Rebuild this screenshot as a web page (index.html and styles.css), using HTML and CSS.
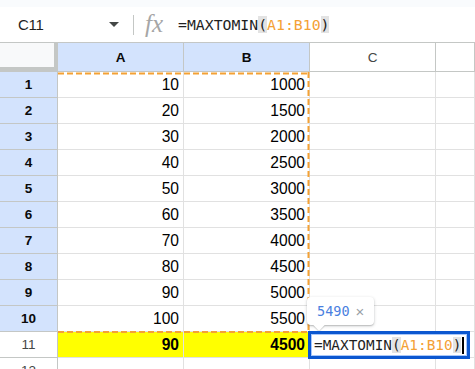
FILE: index.html
```html
<!DOCTYPE html>
<html>
<head>
<meta charset="utf-8">
<link rel="stylesheet" href="styles.css">
</head>
<body>
<div class="app">
  <div class="topstrip"></div>
  <div class="fbar">
    <div class="namebox"><span class="ref">C11</span><span class="caret"></span></div>
    <div class="sep"></div>
    <div class="fx">fx</div>
    <div class="formula">=MAXTOMIN<span class="paren">(</span><span class="rng">A1:B10</span><span class="paren">)</span></div>
  </div>
  <div class="sheet">
    <div class="grid">
      <div class="corner"></div>
      <div class="ch sel">A</div>
      <div class="ch sel">B</div>
      <div class="ch">C</div>
      <div class="ch"></div>

      <div class="rh sel">1</div><div class="c">10</div><div class="c">1000</div><div class="c"></div><div class="c"></div>
      <div class="rh sel">2</div><div class="c">20</div><div class="c">1500</div><div class="c"></div><div class="c"></div>
      <div class="rh sel">3</div><div class="c">30</div><div class="c">2000</div><div class="c"></div><div class="c"></div>
      <div class="rh sel">4</div><div class="c">40</div><div class="c">2500</div><div class="c"></div><div class="c"></div>
      <div class="rh sel">5</div><div class="c">50</div><div class="c">3000</div><div class="c"></div><div class="c"></div>
      <div class="rh sel">6</div><div class="c">60</div><div class="c">3500</div><div class="c"></div><div class="c"></div>
      <div class="rh sel">7</div><div class="c">70</div><div class="c">4000</div><div class="c"></div><div class="c"></div>
      <div class="rh sel">8</div><div class="c">80</div><div class="c">4500</div><div class="c"></div><div class="c"></div>
      <div class="rh sel">9</div><div class="c">90</div><div class="c">5000</div><div class="c"></div><div class="c"></div>
      <div class="rh sel">10</div><div class="c">100</div><div class="c">5500</div><div class="c"></div><div class="c"></div>
      <div class="rh">11</div><div class="c hl">90</div><div class="c hl">4500</div><div class="c"></div><div class="c"></div>
      <div class="rh">12</div><div class="c"></div><div class="c"></div><div class="c"></div><div class="c"></div>
    </div>

    <svg class="marquee" width="253" height="263" viewBox="0 0 253 263">
      <path d="M0 1.5 H251 M250.5 0 V261 M0 260 H251" fill="none" stroke="#f4a135" stroke-width="2" stroke-dasharray="6 3"/>
    </svg>

    <div class="tip">
      <span class="tipval">5490</span><span class="tipx">×</span>
      <span class="tail"></span>
    </div>

    <div class="editor">=MAXTOMIN<span class="paren">(</span><span class="rng">A1:B10</span><span class="paren">)</span><span class="cursor"></span></div>
  </div>
</div>
</body>
</html>
```

FILE: styles.css
```css
html, body {
  margin: 0;
  padding: 0;
  background: #ffffff;
  overflow: hidden;
}

.app {
  width: 475px;
  height: 369px;
  overflow: hidden;
  font-family: "Liberation Sans", Arial, sans-serif;
  color: #1f1f1f;
}

.topstrip {
  height: 7px;
  background: #f9fbfd;
}

.fbar {
  height: 35px;
  border-bottom: 1px solid #c4c7c5;
  display: flex;
  align-items: center;
  background: #ffffff;
}

.namebox {
  width: 133px;
  box-sizing: border-box;
  padding-left: 18px;
  display: flex;
  align-items: center;
}

.ref {
  font-size: 15px;
  color: #1f1f1f;
  letter-spacing: -0.3px;
}

.caret {
  margin-left: auto;
  margin-right: 14px;
  width: 0;
  height: 0;
  border-left: 5.5px solid transparent;
  border-right: 5.5px solid transparent;
  border-top: 5px solid #444746;
}

.sep {
  width: 1px;
  height: 20px;
  background: #c4c7c5;
}

.fx {
  margin-left: 11px;
  width: 33px;
  font-family: "Liberation Serif", "Times New Roman", serif;
  font-style: italic;
  font-size: 25px;
  color: #a6a6a6;
  letter-spacing: 0;
  line-height: 1;
  margin-top: -3px;
}

.formula {
  font-family: "DejaVu Sans Mono", monospace;
  font-size: 14.8px;
  color: #1f1f1f;
  white-space: nowrap;
}

.paren {
  background: #e3e3e3;
}

.rng {
  color: #f4a135;
}

.sheet {
  position: relative;
}

.grid {
  display: grid;
  grid-template-columns: 58px 126px 126px 126px 1fr;
  grid-template-rows: 29px repeat(12, 26px);
}

.grid > div {
  box-sizing: border-box;
  border-right: 1px solid #e1e1e1;
  border-bottom: 1px solid #e1e1e1;
}

.corner {
  background: #f8f9fa;
  border-right: 4px solid #c4c7c5 !important;
  border-bottom: 5px solid #c4c7c5 !important;
}

.ch {
  display: flex;
  align-items: center;
  justify-content: center;
  font-size: 13.5px;
  color: #444746;
  background: #ffffff;
  border-right-color: #c4c7c5 !important;
  border-bottom-color: #c4c7c5 !important;
}

.ch.sel {
  background: #d3e3fd;
  color: #0a0a0a;
  font-weight: bold;
}

.rh {
  display: flex;
  align-items: center;
  justify-content: center;
  font-size: 13.5px;
  color: #444746;
  background: #ffffff;
  border-right-color: #c4c7c5 !important;
  border-bottom-color: #c4c7c5 !important;
}

.rh.sel {
  background: #d3e3fd;
  color: #0a0a0a;
  font-weight: bold;
}

.c {
  display: flex;
  align-items: center;
  justify-content: flex-end;
  padding-right: 4px;
  font-size: 15.6px;
  color: #000000;
}

.c.hl {
  background: #ffff00;
  font-weight: bold;
}

.marquee {
  position: absolute;
  left: 58px;
  top: 29px;
}

.tip {
  position: absolute;
  left: 307px;
  top: 254px;
  width: 67px;
  height: 28px;
  box-sizing: border-box;
  background: #ffffff;
  border-radius: 4px;
  box-shadow: 0 1px 3px rgba(60, 64, 67, 0.3), 0 1px 1px rgba(60, 64, 67, 0.15);
  display: flex;
  align-items: center;
  padding-left: 10px;
}

.tipval {
  font-family: "DejaVu Sans Mono", monospace;
  font-size: 13.5px;
  color: #4a7fe0;
}

.tipx {
  margin-left: 6px;
  font-size: 15px;
  color: #9aa0a6;
}

.tail {
  position: absolute;
  left: 8px;
  bottom: -4px;
  width: 8px;
  height: 8px;
  background: #ffffff;
  transform: rotate(45deg);
  box-shadow: 1px 1px 1px rgba(60, 64, 67, 0.2);
}

.editor {
  position: absolute;
  left: 308px;
  top: 288px;
  width: 162px;
  height: 28px;
  box-sizing: border-box;
  border: 3px solid #0b57d0;
  box-shadow: inset 0 0 0 1px #a8c7fa;
  background: #ffffff;
  padding-left: 3px;
  display: flex;
  align-items: center;
  font-family: "DejaVu Sans Mono", monospace;
  font-size: 14.4px;
  color: #1f1f1f;
  white-space: nowrap;
}

.cursor {
  display: inline-block;
  width: 2px;
  height: 17px;
  background: #000000;
  margin-left: 1px;
}
```
